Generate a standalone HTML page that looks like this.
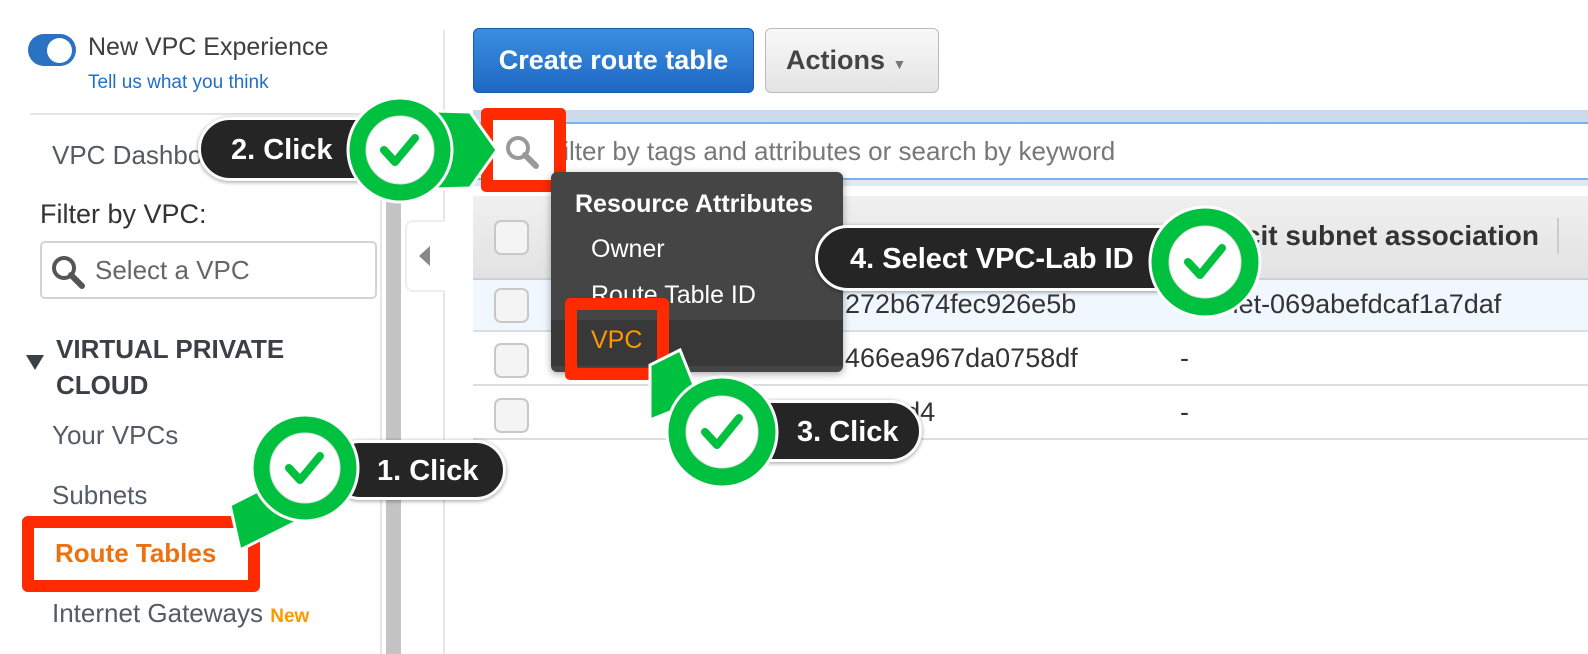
<!DOCTYPE html>
<html><head><meta charset="utf-8"><style>
*{margin:0;padding:0;box-sizing:border-box}
body{width:1588px;height:654px;overflow:hidden;background:#fff;font-family:"Liberation Sans",sans-serif;position:relative}
.a{position:absolute;white-space:nowrap}
.side{color:#545b64;font-size:26px}
.cb{position:absolute;left:494px;width:35px;height:35px;border:2px solid #c8c8c8;border-radius:7px;background:#f4f4f4}
.pill{position:absolute;background:#252525;border:3px solid #fff;border-radius:40px;color:#fff;font-weight:bold;font-size:29px;box-shadow:0 1px 4px rgba(0,0,0,.4)}
.td{font-size:27px;color:#333}
</style></head><body>
<!-- toggle -->
<div class="a" style="left:28px;top:34px;width:48px;height:32px;border-radius:16px;background:#2a72c2"></div>
<div class="a" style="left:47px;top:38px;width:25px;height:25px;border-radius:50%;background:#fff"></div>
<div class="a" style="left:88px;top:33px;font-size:25px;color:#3b4047">New VPC Experience</div>
<div class="a" style="left:88px;top:72px;font-size:19px;color:#1f6fcf">Tell us what you think</div>
<div class="a" style="left:30px;top:113px;width:390px;height:2px;background:#e4e4e4"></div>
<div class="a side" style="left:52px;top:140px">VPC Dashboard</div>
<div class="a" style="left:40px;top:199px;font-size:27px;color:#333">Filter by VPC:</div>
<div class="a" style="left:40px;top:241px;width:337px;height:58px;border:2px solid #d3d3d3;border-radius:5px"></div>
<svg class="a" style="left:50px;top:254px" width="36" height="36"><circle cx="14" cy="14" r="10" fill="none" stroke="#555" stroke-width="4"/><line x1="21" y1="21" x2="32" y2="32" stroke="#555" stroke-width="6" stroke-linecap="round"/></svg>
<div class="a" style="left:95px;top:255px;font-size:26px;color:#666">Select a VPC</div>
<div class="a" style="left:26px;top:355px;width:0;height:0;border-left:9px solid transparent;border-right:9px solid transparent;border-top:15px solid #3b4047"></div>
<div class="a side" style="left:56px;top:331px;font-weight:bold;line-height:36px;color:#3b4047">VIRTUAL PRIVATE<br>CLOUD</div>
<div class="a side" style="left:52px;top:420px">Your VPCs</div>
<div class="a side" style="left:52px;top:480px">Subnets</div>
<div class="a side" style="left:55px;top:538px;color:#ec7211;font-weight:bold">Route Tables</div>
<div class="a side" style="left:52px;top:598px">Internet Gateways <span style="color:#ff9900;font-size:19px;font-weight:bold">New</span></div>
<div class="a" style="left:22px;top:516px;width:238px;height:76px;border:12px solid #ff2a00;border-radius:6px"></div>
<!-- scrollbar -->
<div class="a" style="left:380px;top:190px;width:2px;height:464px;background:#e6e6e6"></div>
<div class="a" style="left:386px;top:190px;width:15px;height:464px;background:#c4c4c4"></div>
<div class="a" style="left:443px;top:30px;width:2px;height:624px;background:#e6e6e6"></div>
<div class="a" style="left:405px;top:220px;width:40px;height:72px;border:2px solid #eee;border-right:none;border-radius:8px 0 0 8px;background:#fff"></div>
<div class="a" style="left:419px;top:246px;width:0;height:0;border-top:10px solid transparent;border-bottom:10px solid transparent;border-right:11px solid #888"></div>
<!-- buttons -->
<div class="a" style="left:473px;top:28px;width:281px;height:65px;border-radius:6px;background:linear-gradient(#3a8ee0,#1f68c4);border:1px solid #1a5aa8;color:#fff;font-weight:bold;font-size:27px;text-align:center;line-height:63px">Create route table</div>
<div class="a" style="left:765px;top:28px;width:174px;height:65px;border-radius:6px;background:linear-gradient(#f8f8f8,#e4e4e4);border:1px solid #bbb;color:#444;font-weight:bold;font-size:27px;line-height:63px;padding-left:20px">Actions <span style="font-size:14px;color:#777">▼</span></div>
<!-- search bar -->
<div class="a" style="left:473px;top:110px;width:1115px;height:76px;background:linear-gradient(#c9d9ea,#e0eaf4)"></div>
<div class="a" style="left:473px;top:122px;width:1115px;height:58px;background:#fff;border-top:2px solid #7cb3e8;border-bottom:2px solid #7cb3e8"></div>
<div class="a" style="left:556px;top:136px;font-size:26px;color:#777">filter by tags and attributes or search by keyword</div>
<div class="a" style="left:481px;top:108px;width:85px;height:84px;border:12px solid #ff2a00;border-radius:5px;background:#fff"></div>
<svg class="a" style="left:503px;top:133px" width="40" height="40"><circle cx="15" cy="15" r="10" fill="none" stroke="#999" stroke-width="4"/><line x1="22" y1="22" x2="33" y2="33" stroke="#999" stroke-width="6" stroke-linecap="round"/></svg>
<!-- table -->
<div class="a" style="left:473px;top:196px;width:1115px;height:84px;background:linear-gradient(#f0f0f0,#e2e2e2);border-bottom:2px solid #d0d0d0"></div>
<div class="a" style="left:1178px;top:220px;font-size:28px;font-weight:bold;color:#333">Explicit subnet association</div>
<div class="a" style="left:1557px;top:218px;width:2px;height:36px;background:#ccc"></div>
<div class="a" style="left:473px;top:280px;width:1115px;height:52px;background:#f0f7ff;border-bottom:2px solid #ddd"></div>
<div class="a" style="left:473px;top:332px;width:1115px;height:54px;border-bottom:2px solid #ddd"></div>
<div class="a" style="left:473px;top:386px;width:1115px;height:54px;border-bottom:2px solid #ddd"></div>
<div class="cb" style="top:220px"></div><div class="cb" style="top:288px"></div><div class="cb" style="top:343px"></div><div class="cb" style="top:398px"></div>
<div class="a td" style="left:845px;top:289px">272b674fec926e5b</div>
<div class="a td" style="left:1180px;top:289px">subnet-069abefdcaf1a7daf</div>
<div class="a td" style="left:845px;top:343px">466ea967da0758df</div>
<div class="a td" style="left:1180px;top:343px">-</div>
<div class="a td" style="left:790px;top:397px">rtb-bff891d4</div>
<div class="a td" style="left:1180px;top:397px">-</div>
<!-- dropdown -->
<div class="a" style="left:551px;top:172px;width:292px;height:200px;background:#454545;border-radius:6px;box-shadow:0 2px 8px rgba(0,0,0,.35)"></div>
<div class="a" style="left:551px;top:320px;width:292px;height:46px;background:#383838"></div>
<div class="a" style="left:575px;top:190px;font-size:25px;font-weight:bold;color:#fff">Resource Attributes</div>
<div class="a" style="left:591px;top:235px;font-size:25px;color:#fff">Owner</div>
<div class="a" style="left:591px;top:281px;font-size:25px;color:#fff">Route Table ID</div>
<div class="a" style="left:591px;top:326px;font-size:25px;color:#ff9900">VPC</div>
<div class="a" style="left:565px;top:298px;width:104px;height:82px;border:12px solid #ff2a00;border-radius:5px"></div>
<!-- callouts -->
<div class="pill" style="left:198px;top:117px;width:200px;height:64px;padding:14px 0 0 30px">2. Click</div>
<div class="pill" style="left:815px;top:225px;width:380px;height:66px;padding:15px 0 0 32px">4. Select VPC-Lab ID</div>
<div class="pill" style="left:730px;top:400px;width:192px;height:62px;padding:13px 0 0 64px">3. Click</div>
<div class="pill" style="left:330px;top:440px;width:176px;height:60px;padding:12px 0 0 44px">1. Click</div>
<svg class="a" style="left:0;top:0" width="1588" height="654">
<g stroke="#fff" stroke-width="3">
<polygon points="400,110 470,112 497,150 470,188 400,190" fill="#00c13f"/>
<polygon points="700,400 680,350 650,365 650,420" fill="#00c13f"/>
<polygon points="280,480 230,505 240,550 300,520" fill="#00c13f"/>
</g>
<g fill="#00c13f" stroke="#fff" stroke-width="3">
<circle cx="400" cy="150" r="52"/><circle cx="1205" cy="262" r="55"/><circle cx="722" cy="432" r="55"/><circle cx="305" cy="468" r="53"/>
</g>
<g fill="#fff" stroke="#ddd" stroke-width="1">
<circle cx="400" cy="150" r="34"/><circle cx="1205" cy="262" r="36"/><circle cx="722" cy="432" r="36"/><circle cx="305" cy="468" r="35"/>
</g>
<g fill="none" stroke="#00c13f" stroke-width="8" stroke-linecap="round" stroke-linejoin="round">
<path d="M384,150 l11,12 l20,-24"/><path d="M1188,262 l12,13 l22,-27"/><path d="M705,432 l12,13 l22,-27"/><path d="M289,468 l11,12 l20,-24"/>
</g>
</svg>
</body></html>
